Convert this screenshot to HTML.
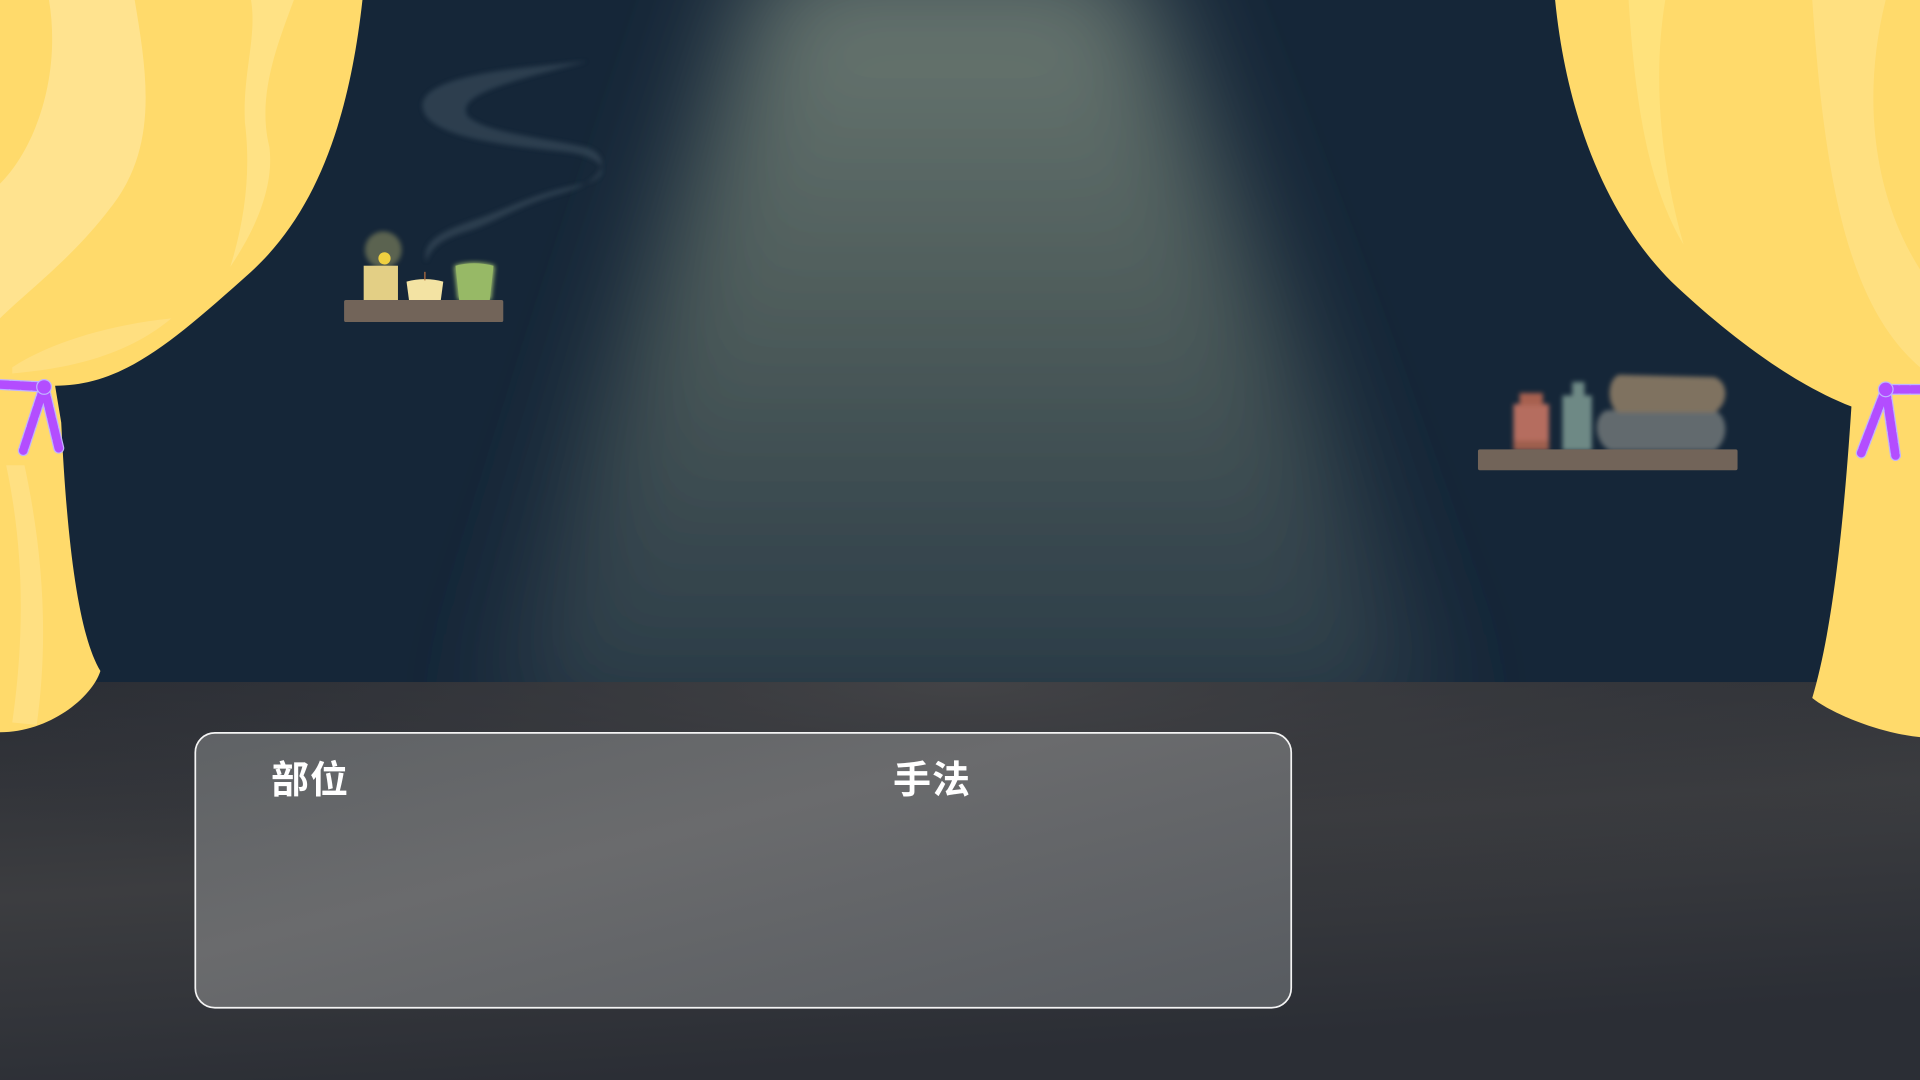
<!DOCTYPE html>
<html><head><meta charset="utf-8"><style>
html,body{margin:0;padding:0;width:1920px;height:1080px;overflow:hidden;background:#152638}
svg{position:absolute;left:0;top:0}
.t{position:absolute;top:749px;font:bold 38px "Liberation Sans","Noto Sans CJK SC",sans-serif;color:#fff;letter-spacing:1px}
</style></head><body>
<svg width="1920" height="1080" viewBox="0 0 1568 882" preserveAspectRatio="none">
<defs>
<linearGradient id="floor" x1="0" y1="0" x2="0.3" y2="1"><stop offset="0" stop-color="#2a2d34"/><stop offset="0.5" stop-color="#3c3d40"/><stop offset="1" stop-color="#2b2e35"/></linearGradient>
<radialGradient id="floorl" cx="0.5" cy="0" r="0.6"><stop offset="0" stop-color="#48484a" stop-opacity="0.8"/><stop offset="1" stop-color="#2b2e35" stop-opacity="0"/></radialGradient>
<linearGradient id="beam" x1="0" y1="0" x2="0" y2="1"><stop offset="0" stop-color="#6d7b74" stop-opacity="1"/><stop offset="0.5" stop-color="#55635f" stop-opacity="0.85"/><stop offset="1" stop-color="#3a4a52" stop-opacity="0.55"/></linearGradient>
<filter id="b30" x="-50%" y="-20%" width="200%" height="140%"><feGaussianBlur stdDeviation="45"/></filter>
<filter id="b2"><feGaussianBlur stdDeviation="2"/></filter>
<filter id="b4"><feGaussianBlur stdDeviation="4"/></filter>
<linearGradient id="panel" x1="0" y1="0" x2="1" y2="1"><stop offset="0" stop-color="#5f6265"/><stop offset="0.4" stop-color="#6a6b6d"/><stop offset="1" stop-color="#575b60"/></linearGradient>
</defs>
<rect width="1568" height="882" fill="#152638"/>
<path d="M630,-40 L920,-40 L1180,600 L400,600 Z" fill="url(#beam)" filter="url(#b30)"/>
<rect y="557" width="1568" height="325" fill="url(#floor)"/>
<rect y="557" width="1568" height="325" fill="url(#floorl)"/>
<!-- smoke -->
<path d="M348,214 C344,196 362,188 392,178 C420,168 440,156 478,150 C500,144 496,128 462,124 C405,118 362,112 348,95 C335,75 365,62 430,55 L480,50 C410,68 372,78 382,95 C396,108 440,112 478,120 C500,127 496,148 458,158 C422,168 405,182 378,190 C360,196 352,202 348,214 Z" fill="#344657" opacity="0.75" filter="url(#b2)"/>
<!-- left shelf -->
<circle cx="313" cy="204" r="15" fill="#8a8c60" opacity="0.6" filter="url(#b2)"/>
<circle cx="314" cy="211" r="5" fill="#f0d040"/>
<rect x="297" y="217" width="28" height="28" fill="#e3cf85"/>
<path d="M332,230 Q347,226 362,230 L360,245 L334,245 Z" fill="#f3e3a3"/>
<line x1="347" y1="222" x2="347" y2="229" stroke="#b87040" stroke-width="1"/>
<path d="M371,217 Q387,212 404,217 L401,245 L374,245 Z" fill="#a0c070" filter="url(#b2)"/>
<path d="M372,217 Q387,213 403,217 L400,245 L375,245 Z" fill="#97b966"/>
<rect x="281" y="245" width="130" height="18" rx="1.5" fill="#726459"/>
<!-- right shelf -->
<g filter="url(#b2)">
<rect x="1236" y="330" width="29" height="38" fill="#b56d5e"/>
<rect x="1241" y="321" width="19" height="10" fill="#a7604f"/>
<rect x="1236" y="360" width="29" height="8" fill="#9e5e4e"/>
<rect x="1276" y="323" width="24" height="45" fill="#6e8985"/>
<rect x="1284" y="312" width="10" height="12" fill="#6e8985"/>
<path d="M1312,335 C1300,340 1302,362 1315,368 L1400,368 C1412,360 1412,340 1400,335 Z" fill="#626b6e"/>
<path d="M1322,306 C1312,310 1312,332 1322,337 L1400,337 C1412,330 1412,312 1400,308 Z" fill="#7f7260"/>
</g>
<rect x="1207" y="367" width="212" height="17" rx="1.5" fill="#726459"/>
<!-- left curtain -->
<path d="M0,0 L296,0 C286,90 262,170 205,222 C140,280 100,315 45,315 L50,345 C55,450 65,520 82,548 C75,570 40,598 0,598 Z" fill="#ffda6b"/>
<path d="M40,0 L110,0 C120,60 130,120 90,170 C60,210 20,240 0,260 L0,150 C30,120 50,60 40,0 Z" fill="#ffe9a6" opacity="0.6"/>
<path d="M205,0 L240,0 C225,40 210,80 220,120 C225,160 200,200 188,218 C200,180 205,140 200,100 C198,60 210,30 205,0 Z" fill="#ffe796" opacity="0.6"/>
<path d="M10,300 C40,280 90,265 140,260 C110,285 70,300 10,305 Z" fill="#ffe496" opacity="0.5"/>
<path d="M5,380 C20,450 20,520 10,590 L30,592 C40,520 35,450 20,380 Z" fill="#ffe59a" opacity="0.5"/>
<!-- right curtain -->
<path d="M1270,0 L1568,0 L1568,602 C1530,598 1492,580 1480,570 C1495,520 1505,440 1512,332 C1460,312 1405,268 1365,230 C1315,180 1280,100 1270,0 Z" fill="#ffda6b"/>
<path d="M1330,0 L1360,0 C1350,60 1355,130 1375,200 C1345,150 1335,80 1330,0 Z" fill="#ffe27e" opacity="0.9"/>
<path d="M1480,0 L1540,0 C1520,80 1530,160 1568,220 L1568,300 C1510,250 1490,150 1480,0 Z" fill="#ffe596" opacity="0.5"/>
<!-- ties -->
<g fill="none" stroke-linecap="round">
<path d="M0,314 L36,316 M36,316 L19,368 M36,316 L48,366" stroke="#c0b4ff" stroke-width="9"/>
<path d="M0,314 L36,316 M36,316 L19,368 M36,316 L48,366" stroke="#b34dff" stroke-width="7" stroke-dasharray="7 2"/>
<path d="M1568,318 L1540,318 M1540,318 L1520,370 M1540,318 L1548,372" stroke="#c0b4ff" stroke-width="9"/>
<path d="M1568,318 L1540,318 M1540,318 L1520,370 M1540,318 L1548,372" stroke="#b34dff" stroke-width="7" stroke-dasharray="7 2"/>
</g>
<circle cx="36" cy="316" r="6" fill="#b34dff" stroke="#c0b4ff"/>
<circle cx="1540" cy="318" r="6" fill="#b34dff" stroke="#c0b4ff"/>
<!-- panel -->
<rect x="159.5" y="598.5" width="895" height="224.5" rx="16" fill="url(#panel)" stroke="#f4f4f4" stroke-width="1.4"/>
</svg>
<div class="t" style="left:271px">部位</div>
<div class="t" style="left:893px">手法</div>
</body></html>
